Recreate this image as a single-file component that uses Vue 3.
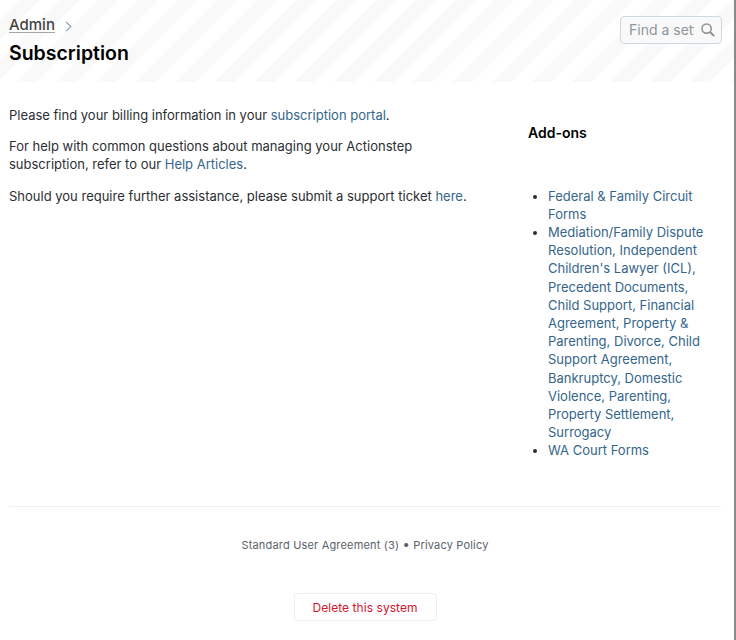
<template>
  <div class="page">
    <header class="head">
      <div class="titles">
        <div class="crumbs">
          <a class="crumb">Admin</a>
          <svg class="chev" width="7" height="11" viewBox="0 0 7 11"><path d="M1 1l5 4.5L1 10" fill="none" stroke="#8fa3bf" stroke-width="1.1" /></svg>
        </div>
        <h1>Subscription</h1>
      </div>
      <div class="search">
        <input class="search-input" type="text" placeholder="Find a setting" />
        <svg class="search-icon" width="14" height="14" viewBox="0 0 14 14"><circle cx="5.6" cy="5.6" r="4.6" fill="none" stroke="#8c9196" stroke-width="1.5" /><path d="M9 9l4.2 4.2" stroke="#8c9196" stroke-width="1.9" /></svg>
      </div>
    </header>

    <main class="content">
      <section class="left">
        <p>Please find your billing information in your <a>subscription portal</a>.</p>
        <p>For help with common questions about managing your Actionstep subscription, refer to our <a>Help Articles</a>.</p>
        <p>Should you require further assistance, please submit a support ticket <a>here</a>.</p>
      </section>
      <aside class="right">
        <h2>Add-ons</h2>
        <ul>
          <li v-for="item in addons" :key="item"><a>{{ item }}</a></li>
        </ul>
      </aside>
    </main>

    <footer class="foot">
      <div class="links">Standard User Agreement (3) <span class="dot">•</span> Privacy Policy</div>
      <button class="danger">Delete this system</button>
    </footer>
  </div>
</template>

<script setup>
const addons = [
  'Federal & Family Circuit Forms',
  "Mediation/Family Dispute Resolution, Independent Children's Lawyer (ICL), Precedent Documents, Child Support, Financial Agreement, Property & Parenting, Divorce, Child Support Agreement, Bankruptcy, Domestic Violence, Parenting, Property Settlement, Surrogacy",
  'WA Court Forms'
]
</script>

<style>
html, body {
  margin: 0;
  background: #fff;
  overflow: hidden;
}
</style>

<style scoped>
.page {
  box-sizing: border-box;
  width: 736px;
  height: 640px;
  border-right: 2px solid #8a8a8a;
  font-family: Inter, "Liberation Sans", sans-serif;
  font-size: 13px;
  line-height: 18.2px;
  color: #2b2e33;
  overflow: hidden;
}

.head {
  height: 82px;
  box-sizing: border-box;
  padding: 15px 12px 0 9px;
  display: flex;
  justify-content: space-between;
  align-items: flex-start;
  background: repeating-linear-gradient(135deg, #fff 0 14px, #f9f9f9 14px 28px);
}

.crumbs {
  display: flex;
  align-items: center;
  gap: 10px;
  height: 20px;
}

.crumb {
  font-size: 15px;
  font-weight: 500;
  color: #444;
  border-bottom: 1px solid #a5a5a5;
  height: 16px;
  line-height: 17px;
  margin-top: -2px;
}

.chev {
  margin-top: 3px;
}

h1 {
  margin: 5px 0 0;
  font-size: 19.5px;
  font-weight: 600;
  line-height: 26px;
  color: #000;
}

.search {
  box-sizing: border-box;
  width: 102px;
  height: 28px;
  margin-top: 1px;
  padding: 0 6px 0 8px;
  display: flex;
  align-items: center;
  justify-content: space-between;
  border: 1px solid #ced8e0;
  border-radius: 4px;
  background: #f9f9f9;
}

.search-input {
  width: 65px;
  min-width: 0;
  margin-top: -2px;
  padding: 0;
  border: 0;
  outline: 0;
  background: transparent;
  font-family: inherit;
  font-size: 14px;
  color: #8d959d;
}

.search-input::placeholder {
  color: #8d959d;
  opacity: 1;
}

.search-icon {
  flex: none;
}

.content {
  display: flex;
  padding: 24px 12px 0 9px;
  height: 400px;
  box-sizing: border-box;
}

.left {
  width: 468px;
  margin-right: 51px;
  flex: none;
}

.left p {
  margin: 0 0 13px;
}

a {
  color: #34658a;
}

.right {
  flex: 1;
}

h2 {
  margin: 18px 0 44.6px;
  font-size: 14px;
  font-weight: 600;
  line-height: 18px;
  color: #000;
}

ul {
  margin: 0;
  padding: 0 0 0 20px;
}

.foot {
  margin: 24px 13px 0 9px;
  border-top: 1px solid #f0f0f0;
  text-align: center;
}

.links {
  margin-top: 29px;
  font-size: 11px;
  line-height: 18px;
  color: #5a6269;
  letter-spacing: 0.18px;
}

.dot {
  font-size: 13px;
  line-height: 1;
}

.danger {
  display: block;
  margin: 39px auto 0;
  width: 143px;
  height: 28px;
  padding: 0;
  border: 1px solid #eceeef;
  border-radius: 3px;
  background: #fff;
  font-family: inherit;
  font-size: 12px;
  letter-spacing: 0.06px;
  color: #d4152e;
}
</style>
